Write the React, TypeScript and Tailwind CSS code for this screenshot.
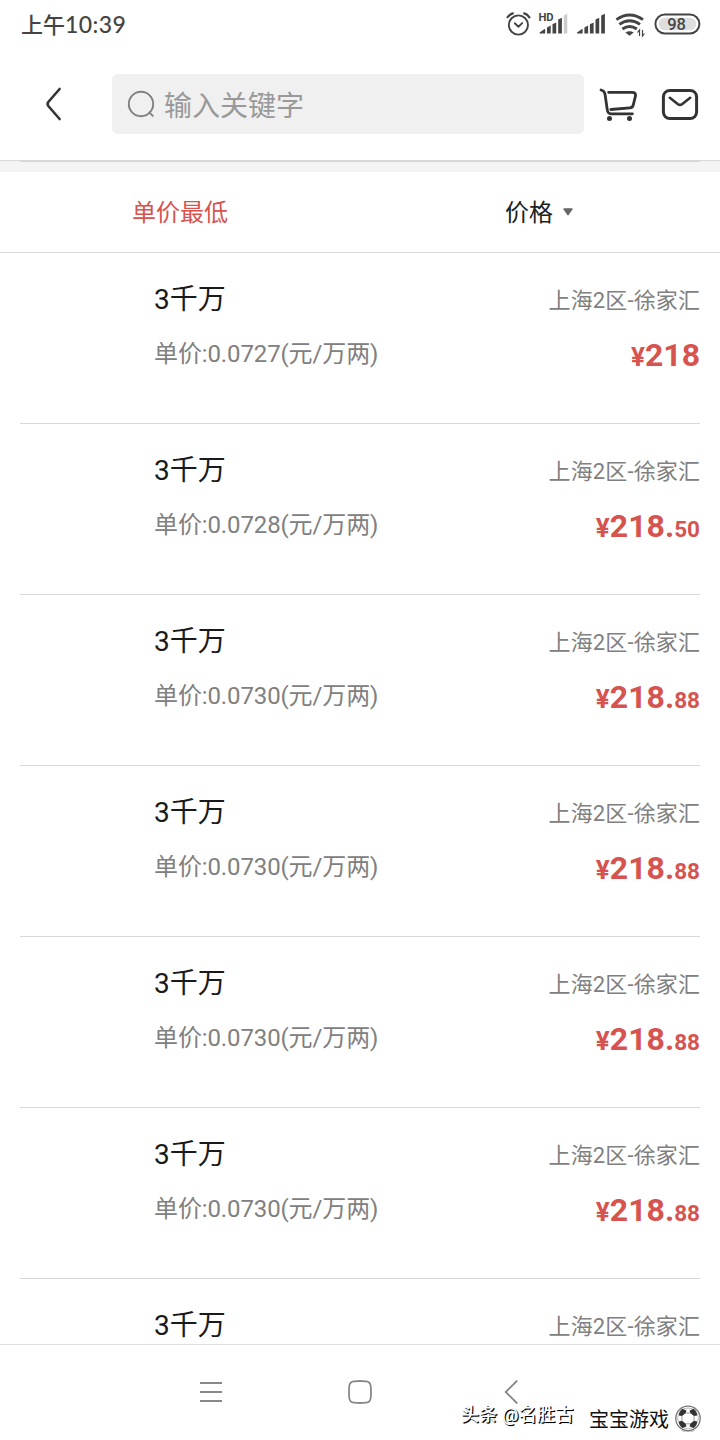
const ui = "font-['Roboto','Noto_Sans_CJK_SC',sans-serif]";

type Offer = { unit?: string; whole?: string; cents?: string };

const offers: Offer[] = [
  { unit: '0.0727', whole: '218' },
  { unit: '0.0728', whole: '218', cents: '50' },
  { unit: '0.0730', whole: '218', cents: '88' },
  { unit: '0.0730', whole: '218', cents: '88' },
  { unit: '0.0730', whole: '218', cents: '88' },
  { unit: '0.0730', whole: '218', cents: '88' },
  {},
];

function StatusIcons() {
  return (
    <svg className="block h-[50px] w-[230px]" viewBox="490 0 230 50" fill="none">
      <g stroke="#444" strokeWidth="1.9" strokeLinecap="round" strokeLinejoin="round">
        <circle cx="518.4" cy="25" r="9.6" />
        <path d="M514.8 23.3l3.6 3.4 3.8-3.6" />
        <path d="M507.6 17.2q2.2-3 5.2-3.8M524.2 13.4q3.2.9 5.2 3.9" strokeWidth="2.2" />
      </g>
      <text x="538.4" y="20.9" fontSize="11.2" fontWeight="700" fill="#444" className="font-['Roboto']">HD</text>
      <g fill="#444">
        <path d="M539.6 33.6v-1.2l5-3.3h.6v4.5zM547 27.4l3.7-1.9v8.1H547zM552.5 24.3l3.7-1.9v11.2h-3.7zM558.2 19.6l3.7-1.9v15.9h-3.7z" />
        <path d="M563.8 15.6l3.5-1.8v19.8h-3.5z" fill="#ccc" />
        <path d="M577 33.6v-1.2l5-3.3h.6v4.5zM584.4 27.4l3.7-1.9v8.1h-3.7zM589.9 24.3l3.7-1.9v11.2h-3.7zM595.5 19.6l3.7-1.9v15.9h-3.7zM601.2 15.6l3.7-1.8v19.8h-3.7z" />
        <path d="M625.4 32.6q4.2-2.7 8.3 0l-4.2 3.2z" />
      </g>
      <g stroke="#444" strokeWidth="2.9">
        <path d="M616.4 19.6q13.2-9 26.6 0M619.4 24.4q10.2-7.2 20.6 0M622.4 29q7.2-5.2 14.4 0" />
        <path d="M639.5 36v-6l-2 2.5M642.5 30v6l2-2.5" strokeWidth="1.2" />
      </g>
      <rect x="655.4" y="14.5" width="44" height="19" rx="9.5" stroke="#444" strokeWidth="2" />
      <rect x="658.6" y="17.7" width="37.6" height="12.6" rx="6.3" fill="#dedede" />
      <text x="667.2" y="29.6" fontSize="16.5" fontWeight="500" fill="#444" className="font-['Roboto']">98</text>
    </svg>
  );
}

function CartIcon() {
  return (
    <svg className="block h-[40px] w-[40px]" viewBox="598 84 40 40" fill="none" stroke="#333" strokeWidth="2.8" strokeLinecap="round" strokeLinejoin="round">
      <path d="M601 90q3.4.8 4 4l2.2 15.4q.6 4.400 3.800 4.400H632.400" />
      <path d="M608.600 92.300H632q4.200 0 3.500 3.600l-2.200 9q-.6 2.800-3.400 2.900L610.800 109.500" />
      <circle cx="609.500" cy="118.500" r="2.500" fill="#333" stroke="none" />
      <circle cx="629.500" cy="118.500" r="2.500" fill="#333" stroke="none" />
    </svg>
  );
}

function MailIcon() {
  return (
    <svg className="block h-[34px] w-[38px]" viewBox="661 87 38 34" fill="none" stroke="#333" strokeWidth="3" strokeLinecap="round" strokeLinejoin="round">
      <rect x="663.400" y="90.400" width="33.200" height="28.200" rx="6.500" />
      <path d="M669.800 97.800l8.200 6.400q2 1.400 4 0l8.200-6.400" strokeWidth="2.600" />
    </svg>
  );
}

function BallIcon() {
  return (
    <svg className="block h-[28px] w-[28px]" viewBox="0 0 28 28" fill="none">
      <ellipse cx="14" cy="25.500" rx="7" ry="1.600" fill="#ccc" />
      <circle cx="14" cy="13.400" r="12.200" fill="#fff" stroke="#777" strokeWidth="1.300" />
      <circle cx="14" cy="13.400" r="10.400" stroke="#bbb" strokeWidth="1" />
      <path d="M8.400 3.800l4 1.600-.6 2.600-3.800 3-3.200-.6q.4-4.400 3.600-6.600zM19.600 3.800l-4 1.600.6 2.600 3.800 3 3.200-.6q-.4-4.400-3.600-6.600zM8.400 23l4-1.600-.6-2.600-3.800-3-3.200.6q.4 4.400 3.600 6.600zM19.600 23l-4-1.600.6-2.600 3.800-3 3.200.6q-.4 4.400-3.600 6.600z" fill="#333" />
      <path d="M11.800 8h4.400M11.800 18.800h4.400M8 11v4.800M20 11v4.800" stroke="#999" strokeWidth="1" />
    </svg>
  );
}

function OfferRow({ unit, whole, cents }: Offer) {
  return (
    <li className="mx-5 flex h-[171px] shrink-0 justify-between border-b border-[#d9d9d9] pl-[134px]">
      <div className="pt-[27px]">
        <div className="text-[28px] leading-10 text-[#1a1a1a]">3千万</div>
        {unit && <div className="mt-[14px] text-2xl leading-10 tracking-[-0.12px] text-[#808080]">单价:{unit}(元/万两)</div>}
      </div>
      <div className="pt-[28px] text-right">
        <div className="text-[22px] leading-10 tracking-[0.12px] text-[#808080]">上海2区-徐家汇</div>
        {whole && (
          <div className="mt-[14px] text-[32px] leading-10 font-bold text-[#d6534f]">
            <span className="text-[26px]">¥</span>
            {whole}
            {cents && <>.<span className="text-[22.5px]">{cents}</span></>}
          </div>
        )}
      </div>
    </li>
  );
}

export default function App() {
  return (
    <div className={`flex h-[1440px] w-[720px] flex-col overflow-hidden bg-white ${ui}`}>
      <div className="flex h-[50px] shrink-0 justify-between pl-[21px]">
        <span className="font-['Lato','Noto_Sans_CJK_SC',sans-serif] text-[22px] leading-[48px] font-medium text-[#444]">
          上午<span className="text-[23px] tracking-[0.4px]">10:39</span>
        </span>
        <StatusIcons />
      </div>

      <header className="flex h-[110px] shrink-0 items-center pb-[2px]">
        <svg className="ml-[44px] block h-[36px] w-[20px]" viewBox="44 86 20 36" fill="none" stroke="#333" strokeWidth="2.6" strokeLinecap="round" strokeLinejoin="round">
          <path d="M59.6 89L48.3 102q-1.400 2 0 4L59.600 119" />
        </svg>
        <div className="ml-[48px] flex h-[60px] w-[472px] items-center rounded-md bg-[#f0f0f0] pl-[15px]">
          <svg className="block h-[30px] w-[30px]" viewBox="127 89 30 30" fill="none" stroke="#808080" strokeWidth="1.9" strokeLinecap="round">
            <circle cx="141" cy="104" r="12.2" />
            <path d="M149.4 112.4l3.4 3.4" />
          </svg>
          <span className="ml-[7px] pt-[5px] text-[28px] leading-10 text-[#999]">输入关键字</span>
        </div>
        <div className="ml-[14px]"><CartIcon /></div>
        <div className="ml-[23px]"><MailIcon /></div>
      </header>

      <div className="h-3 shrink-0 border-t border-[#d9d9d9] bg-[#f4f4f4]">
        <div className="mx-5 h-px bg-[#d9d9d9]" />
      </div>

      <nav className="flex h-[81px] shrink-0 border-b border-[#d9d9d9] text-2xl leading-[82px]">
        <span className="w-1/2 text-center text-[#d6534f]">单价最低</span>
        <span className="flex w-1/2 items-center justify-center gap-[10px] pr-[2px] text-[#222]">
          <span className="pt-[2px]">价格</span>
          <svg className="block h-2 w-[10px]" viewBox="0 0 11 8" fill="#666"><path d="M1 0h9q1 0 .5 1L6.3 7.2q-.8.9-1.6 0L.5 1Q0 0 1 0z" /></svg>
        </span>
      </nav>

      <ul className="flex h-[1091px] shrink-0 flex-col overflow-hidden">
        {offers.map((o, i) => <OfferRow key={i} {...o} />)}
      </ul>

      <footer className="relative h-24 shrink-0 border-t border-[#e0e0e0] bg-white">
        <div className="flex items-start pt-[35px] pl-[199px]">
          <svg className="block h-6 w-6" viewBox="0 0 24 24" stroke="#888" strokeWidth="1.8"><path d="M1 3h22M1 12h22M1 21h22" /></svg>
          <svg className="ml-[125px] block h-6 w-6" viewBox="0 0 24 24" fill="none" stroke="#888" strokeWidth="1.8"><path d="M6 1.3Q12 .7 18 1.3 22.3 1.7 22.7 6q.6 6 0 12-.4 4.3-4.7 4.7-6 .6-12 0Q1.7 22.3 1.3 18 .7 12 1.3 6 1.7 1.7 6 1.3z" /></svg>
          <svg className="ml-[132px] block h-6 w-[14px]" viewBox="0 0 14 24" fill="none" stroke="#888" strokeWidth="1.8"><path d="M13.3 .5L1.7 12l11.600 11.500" /></svg>
        </div>
        <span className="absolute top-[58px] left-[461px] text-[18px] leading-6 font-medium tracking-[0.3px] whitespace-nowrap text-white [text-shadow:1px_1px_0_#000,1px_1px_1px_#444]">头条 @名胜古</span>
        <div className="absolute top-[57px] left-[589px] flex items-center gap-[5px]">
          <span className="pt-[2px] text-[20px] leading-8 whitespace-nowrap text-[#111]">宝宝游戏</span>
          <BallIcon />
        </div>
      </footer>
    </div>
  );
}
